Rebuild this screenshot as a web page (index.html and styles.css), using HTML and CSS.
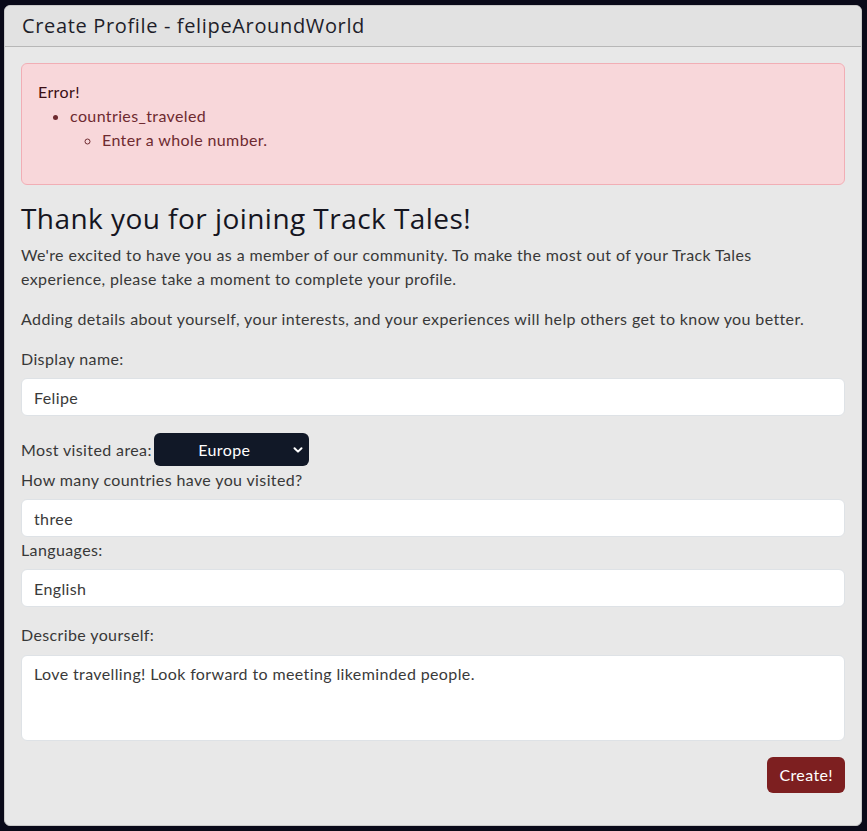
FILE: index.html
```html
<!DOCTYPE html>
<html lang="en">
<head>
<meta charset="utf-8">
<title>Create Profile</title>
<link rel="stylesheet" href="styles.css">
</head>
<body>
<div class="card">
  <div class="card-header">Create Profile - felipeAroundWorld</div>
  <div class="card-body">
    <div class="alert">
      <div class="alert-title">Error!</div>
      <ul class="errors">
        <li>countries_traveled
          <ul class="sub">
            <li>Enter a whole number.</li>
          </ul>
        </li>
      </ul>
    </div>
    <h3 class="title">Thank you for joining Track Tales!</h3>
    <p class="text">We're excited to have you as a member of our community. To make the most out of your Track Tales experience, please take a moment to complete your profile.</p>
    <p class="text">Adding details about yourself, your interests, and your experiences will help others get to know you better.</p>
    <form class="form">
      <label class="label">Display name:</label>
      <input class="input mb" type="text" value="Felipe">
      <div class="select-row">
        <span>Most visited area:</span>
        <div class="select-wrap">
          <select class="select"><option>Europe</option></select>
          <svg class="chev" width="10" height="8" viewBox="0 0 10 8"><path d="M1.5 2.2 L5 5.6 L8.5 2.2" fill="none" stroke="#fff" stroke-width="2" stroke-linecap="round" stroke-linejoin="round"/></svg>
        </div>
      </div>
      <label class="label">How many countries have you visited?</label>
      <input class="input" type="text" value="three">
      <label class="label lang">Languages:</label>
      <input class="input mb" type="text" value="English">
      <label class="label desc">Describe yourself:</label>
      <textarea class="input area">Love travelling! Look forward to meeting likeminded people.</textarea>
      <div class="actions">
        <button class="btn" type="button">Create!</button>
      </div>
    </form>
  </div>
</div>
</body>
</html>
```

FILE: styles.css
```css
* { box-sizing: border-box; }
html, body { margin: 0; }
body {
  background: #0a0a19;
  padding: 5px 5px 5px 4px;
  font-family: "Lato", "Noto Sans", sans-serif;
  font-size: 16px;
  line-height: 24px;
  letter-spacing: 0.38px;
  color: #383838;
}
.card {
  background: #e8e8e8;
  border: 1px solid #c9c9c9;
  border-radius: 6px;
  overflow: hidden;
}
.card-header {
  background: #e2e2e2;
  border-bottom: 1px solid #b7b7b7;
  padding: 8px 17px;
  height: 41px;
  font-family: "Open Sans", sans-serif;
  font-size: 20px;
  line-height: 24px;
  letter-spacing: 0.65px;
  color: #1e1e2a;
}
.card-body { padding: 16px 16px 0 16px; }
.alert {
  background: #f8d7da;
  border: 1px solid #f1aeb5;
  border-radius: 6px;
  padding: 16px;
  color: #6e2a30;
  margin-bottom: 16px;
}
.alert-title { color: #3a0e14; font-weight: 400; }
.errors { margin: 0 0 16px 0; padding-left: 32px; }
.sub { margin: 0; padding-left: 32px; list-style: circle; }
.title {
  margin: 0 0 8px 0;
  font-family: "Open Sans", sans-serif;
  font-weight: 400;
  font-size: 28px;
  line-height: 34px;
  letter-spacing: 0.45px;
  color: #15151f;
}
.text { margin: 0 0 16px 0; max-width: 800px; }
.form { display: flex; flex-direction: column; align-items: stretch; padding-bottom: 32px; }
.label { display: block; margin-bottom: 7px; }
.lang { margin-top: 1px; }
.desc { margin-bottom: 8px; }
.input {
  display: block;
  width: 100%;
  height: 38px;
  border: 1px solid #dee2e6;
  border-radius: 6px;
  background: #fff;
  padding: 6px 12px;
  font-family: inherit;
  font-size: 16px;
  line-height: 24px;
  letter-spacing: 0.38px;
  color: #3a3a3a;
}
.mb { margin-bottom: 16px; }
.area { height: 86px; resize: none; margin-bottom: 16px; }
.select-row {
  display: flex;
  align-items: center;
  gap: 2px;
  height: 35px;
  margin-bottom: 1px;
}
.select-wrap { position: relative; }
.select {
  appearance: none;
  -webkit-appearance: none;
  width: 155px;
  height: 33px;
  border: none;
  border-radius: 6px;
  background: #111827;
  color: #fff;
  font-family: inherit;
  font-size: 16px;
  letter-spacing: 0.38px;
  text-align: center;
  text-align-last: center;
  padding: 0 14px 0 0;
}
.chev { position: absolute; right: 6px; top: 13px; pointer-events: none; }
.actions { display: flex; justify-content: flex-end; }
.btn {
  background: #7d1f20;
  color: #fff;
  border: none;
  border-radius: 6px;
  padding: 6px 12px;
  height: 36px;
  font-family: inherit;
  font-size: 16px;
  line-height: 24px;
  letter-spacing: 0.38px;
}
```
